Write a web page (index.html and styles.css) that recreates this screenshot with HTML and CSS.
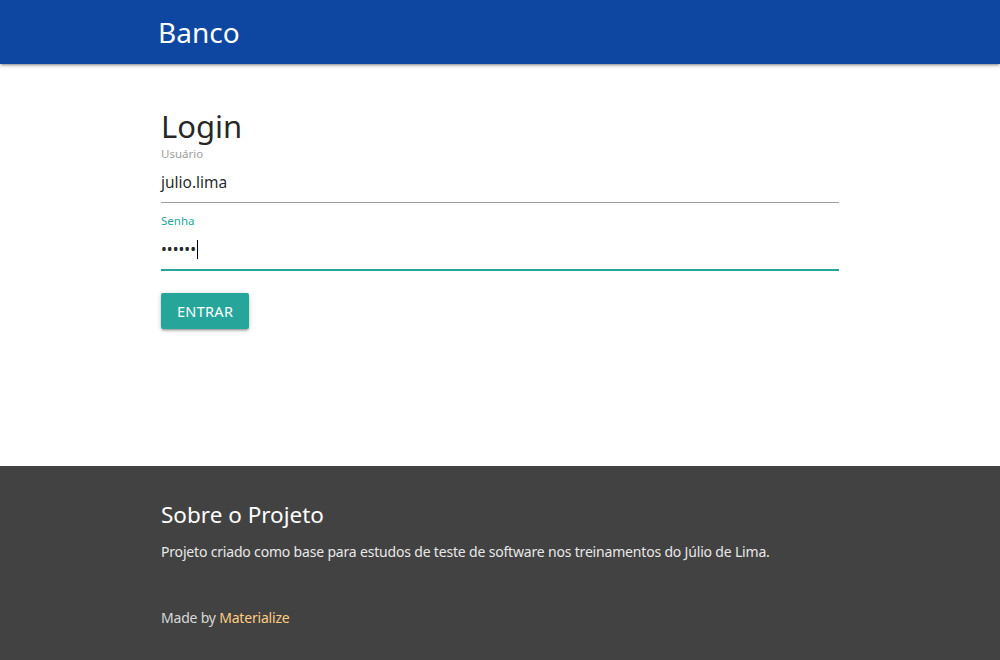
FILE: index.html
```html
<!DOCTYPE html>
<html lang="pt-BR">
<head>
<meta charset="utf-8">
<title>Banco</title>
<link rel="stylesheet" href="styles.css">
</head>
<body>
<nav class="nav">
  <div class="container nav-wrap">
    <a class="brand" href="#">Banco</a>
  </div>
</nav>
<main class="main">
  <div class="container">
    <h4 class="title">Login</h4>
    <div class="field">
      <label class="label">Usuário</label>
      <div class="input">julio.lima</div>
    </div>
    <div class="field active">
      <label class="label">Senha</label>
      <div class="input pass">••••••<span class="caret"></span></div>
    </div>
    <button class="btn">ENTRAR</button>
  </div>
</main>
<footer class="footer">
  <div class="container">
    <h5 class="f-title">Sobre o Projeto</h5>
    <p class="f-text">Projeto criado como base para estudos de teste de software nos treinamentos do Júlio de Lima.</p>
  </div>
  <div class="container copy">Made by <a class="link" href="#">Materialize</a></div>
</footer>
</body>
</html>
```
FILE: styles.css
```css
* { box-sizing: border-box; }
html, body { margin: 0; padding: 0; }
body {
  font-family: "Noto Sans", "Open Sans", sans-serif;
  color: rgba(0,0,0,0.87);
  background: #fff;
  width: 1000px;
  height: 660px;
  overflow: hidden;
}
.container { width: 700px; margin: 0 auto; padding: 0 11px; }
.nav {
  height: 64px;
  background: #0d47a1;
  box-shadow: 0 2px 2px 0 rgba(0,0,0,.14), 0 3px 1px -2px rgba(0,0,0,.12), 0 1px 5px 0 rgba(0,0,0,.2);
  position: relative;
  z-index: 1;
}
.nav-wrap { height: 64px; display: flex; align-items: center; padding-left: 8px; }
.brand { color: #fff; text-decoration: none; font-size: 28px; line-height: 64px; }
.main { height: 402px; padding-top: 42px; }
.title { margin: 0; font-size: 31px; font-weight: 400; line-height: 40px; }
.field { display: flex; flex-direction: column; }
.label { font-size: 11.5px; color: #9e9e9e; line-height: 14px; margin-top: 1px; }
.input {
  font-size: 15.5px;
  line-height: 22px;
  padding: 10px 0 9px;
  border-bottom: 1px solid #9e9e9e;
  color: rgba(0,0,0,0.87);
}
.field + .field { margin-top: 10px; }
.active .label { color: #26a69a; }
.active .input { border-bottom: 2px solid #26a69a; padding-bottom: 9px; }
.pass { display: flex; align-items: center; }
.caret { display: inline-block; width: 1px; height: 19px; background: #000; margin-left: 1px; }
.btn {
  margin-top: 22px;
  height: 36px;
  padding: 0 16px;
  background: #26a69a;
  color: #fff;
  border: none;
  border-radius: 2px;
  font-family: inherit;
  font-size: 14.5px;
  letter-spacing: .3px;
  box-shadow: 0 2px 2px 0 rgba(0,0,0,.14), 0 3px 1px -2px rgba(0,0,0,.12), 0 1px 5px 0 rgba(0,0,0,.2);
}
.footer { background: #424242; height: 194px; padding-top: 34px; color: #fff; }
.f-title { margin: 0; font-size: 22.5px; font-weight: 400; line-height: 30px; }
.f-text { margin: 12px 0 0; font-size: 14px; letter-spacing: -0.18px; color: #e8e8e8; line-height: 20px; }
.copy { margin-top: 46px; font-size: 14px; letter-spacing: -0.2px; color: rgba(255,255,255,.8); line-height: 20px; }
.link { color: #ffcc80; text-decoration: none; }
```
